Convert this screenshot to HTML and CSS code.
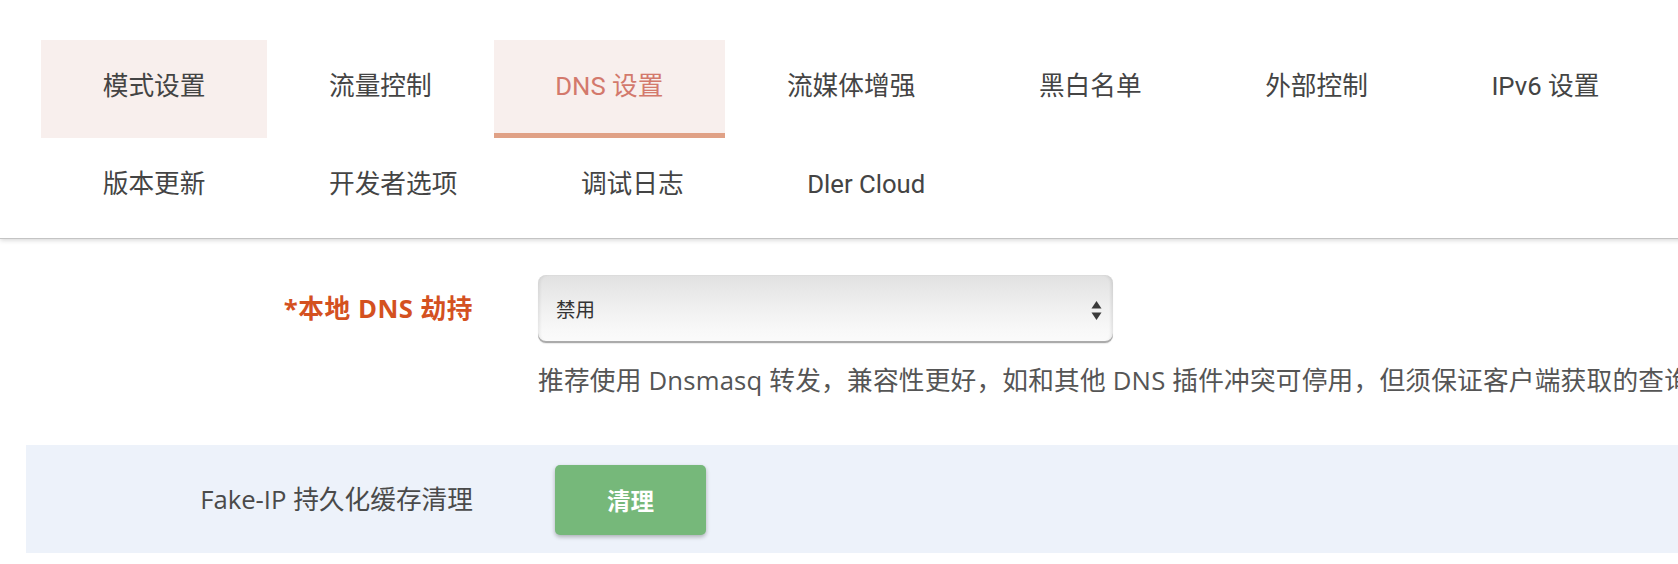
FILE: index.html
```html
<!DOCTYPE html>
<html lang="zh-CN">
<head>
<meta charset="utf-8">
<title>DNS 设置</title>
<link rel="stylesheet" href="styles.css">
</head>
<body>
<div class="page">
  <header class="header">
    <nav class="tabs">
      <div class="tab tab-hover">模式设置</div>
      <div class="tab">流量控制</div>
      <div class="tab tab-active">DNS 设置</div>
      <div class="tab">流媒体增强</div>
      <div class="tab">黑白名单</div>
      <div class="tab">外部控制</div>
      <div class="tab">IPv6 设置</div>
      <div class="tab">版本更新</div>
      <div class="tab">开发者选项</div>
      <div class="tab">调试日志</div>
      <div class="tab">Dler Cloud</div>
    </nav>
  </header>
  <main class="content">
    <section class="field">
      <label class="field-label field-label-required">*本地 DNS 劫持</label>
      <div class="field-value">
        <div class="select">
          <span class="select-text">禁用</span>
          <svg class="select-arrows" width="11" height="20" viewBox="0 0 11 20">
            <polygon points="5.5,0 10.5,7.5 0.5,7.5" fill="#3a3a3a"/>
            <polygon points="0.5,11.5 10.5,11.5 5.5,19" fill="#3a3a3a"/>
          </svg>
        </div>
        <p class="field-desc">推荐使用 Dnsmasq 转发，兼容性更好，如和其他 DNS 插件冲突可停用，但须保证客户端获取的查询结果正确</p>
      </div>
    </section>
    <section class="field field-alt">
      <label class="field-label">Fake-IP 持久化缓存清理</label>
      <div class="field-value">
        <button class="btn-apply">清理</button>
      </div>
    </section>
  </main>
</div>
</body>
</html>
```
FILE: styles.css
```css
html, body {
  margin: 0;
  padding: 0;
  overflow: hidden;
  background: #ffffff;
}

body {
  font-family: "Open Sans", "Noto Sans CJK SC", sans-serif;
  color: #444;
}

.page {
  width: 1900px;
}

.header {
  position: relative;
  z-index: 2;
  background: #fff;
  padding: 40px 0 3px 41px;
  height: 195px;
  box-shadow: 0 1px 0 #c4c4c4, 0 2px 5px rgba(0, 0, 0, 0.18);
  width: 1678px;
  box-sizing: content-box;
}

.tabs {
  display: flex;
  flex-wrap: wrap;
  width: 1720px;
}

.tab {
  box-sizing: border-box;
  height: 97.5px;
  padding: 0 61.75px;
  border-bottom: 5.5px solid transparent;
  font-family: "Roboto", "Noto Sans CJK SC", sans-serif;
  font-size: 25.7px;
  line-height: 92px;
  color: #444;
  white-space: nowrap;
}

.tab-hover {
  background: #f8efed;
}

.tab-active {
  background: #f8efed;
  color: #d3796c;
  border-bottom-color: #e0a186;
}

.content {
  padding-left: 26px;
}

.field {
  display: grid;
  grid-template-columns: 447px 1fr;
  column-gap: 65px;
  align-items: start;
  padding: 36.5px 0 46px;
}

.field-label {
  text-align: right;
  font-size: 25.7px;
  line-height: 68px;
  color: #4a4a4a;
  white-space: nowrap;
}

.field-label-required {
  color: #d4511f;
  font-weight: 700;
  letter-spacing: 0.5px;
}

.field-value {
  min-width: 0;
}

.select {
  position: relative;
  box-sizing: border-box;
  width: 575px;
  height: 68px;
  display: flex;
  align-items: center;
  padding-left: 18px;
  border-radius: 8px;
  background: linear-gradient(#e1e1e1, #efefef 45%, #f8f8f8 80%, #fbfbfb);
  box-shadow: inset 0 -2px 0 #ababab, inset 3px 0 3px -1px rgba(0, 0, 0, 0.07), inset -3px 0 3px -1px rgba(0, 0, 0, 0.09), 0 1px 1px rgba(0, 0, 0, 0.08);
}

.select-text {
  font-size: 19.5px;
  color: #333;
}

.select-arrows {
  position: absolute;
  right: 11px;
  top: 26px;
}

.field-desc {
  margin: 20px 0 0;
  font-size: 25.7px;
  line-height: 36px;
  color: #555;
  white-space: nowrap;
  letter-spacing: 0.2px;
}

.field-alt {
  background: #edf2fa;
  padding: 20px 0 18px;
  align-items: center;
}

.field-alt .field-label {
  line-height: 36px;
}

.btn-apply {
  margin-left: 17px;
  width: 151px;
  height: 70px;
  border: 0;
  border-radius: 5px;
  background: #76b87a;
  color: #fff;
  font-family: "Noto Sans CJK SC", sans-serif;
  font-weight: 700;
  font-size: 23.5px;
  box-shadow: 0 2px 4px rgba(0, 0, 0, 0.28);
  display: block;
}
```
